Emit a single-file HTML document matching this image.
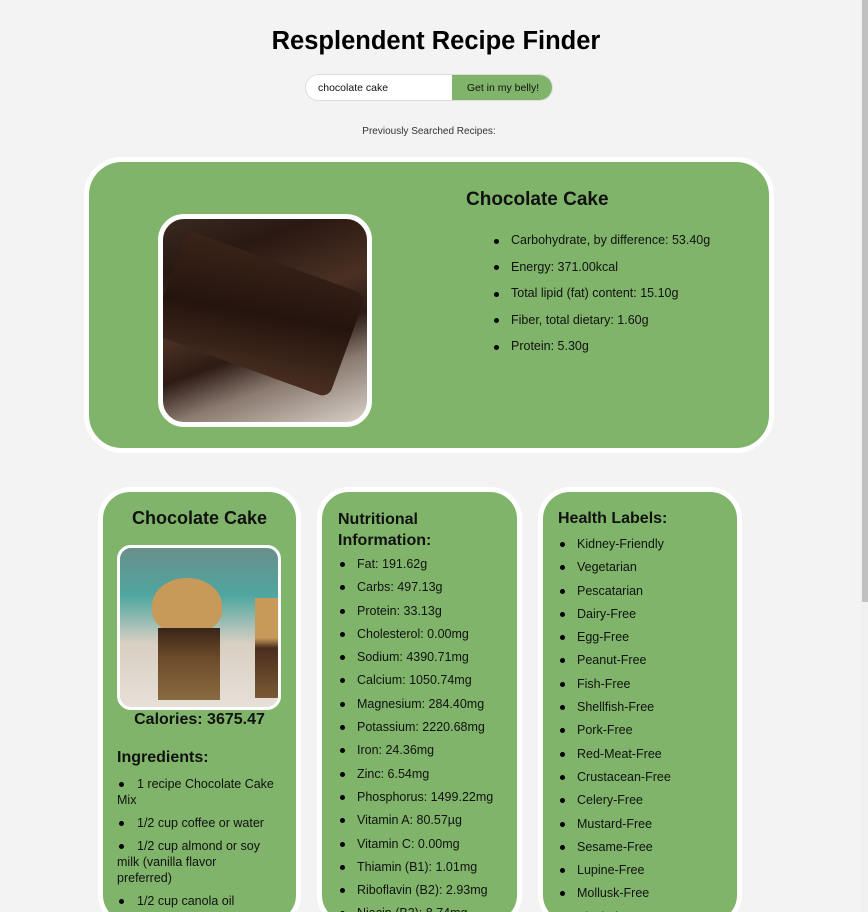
<!DOCTYPE html>
<html><head><meta charset="utf-8"><style>
*{margin:0;padding:0;box-sizing:border-box}
html,body{width:868px;height:912px;overflow:hidden;background:#f3f3f3;font-family:"Liberation Sans",sans-serif;color:#111;position:relative}
.abs{position:absolute}
h1{position:absolute;left:0;width:872px;text-align:center;top:27px;font-size:25.5px;font-weight:bold;color:#000}
.search{left:305px;top:74px;width:248px;height:27px;border:1px solid #ddd;border-radius:14px;background:#fff;overflow:hidden}
.search span{position:absolute;left:12px;top:7px;font-size:10.5px}
.search .btn{position:absolute;left:146px;top:0;width:102px;height:27px;background:#80b46a;font-size:10.5px;text-align:center;line-height:26px}
.prev{left:0;width:858px;text-align:center;top:126px;font-size:10px;color:#333}
.green{background:#80b46a}
.card{border:5px solid #fff;}
ul{list-style:none}
li{position:relative}
li:before{content:"";position:absolute;width:5px;height:5px;border-radius:50%;background:#000}
.top li{font-size:12.5px;height:26.6px;padding-left:17px}
.top li:before{left:0;top:5.5px}
.sm li{font-size:12.5px;line-height:16px;min-height:23.3px;padding-left:19px;white-space:nowrap}
.sm li:before{left:2px;top:6px}
.ing li{padding-left:0;text-indent:20px;margin-bottom:7px;min-height:0;white-space:nowrap}
.ing li:before{left:2px;top:6px}
</style></head><body>
<h1>Resplendent Recipe Finder</h1>
<div class="abs search"><span>chocolate cake</span><div class="btn">Get in my belly!</div></div>
<div class="abs prev">Previously Searched Recipes:</div>

<div class="abs card green" style="left:84px;top:157px;width:690px;height:296px;border-radius:38px"></div>
<div class="abs" style="left:158px;top:214px;width:214px;height:213px;border:5px solid #fff;border-radius:26px;overflow:hidden;background:linear-gradient(160deg,#3a2a22 0%,#2a1812 20%,#4a3024 45%,#2d1b14 60%,#8a7a70 75%,#d8d0c8 100%)">
<div class="abs" style="left:0;top:40px;width:190px;height:110px;background:linear-gradient(170deg,#3b2419,#24140e 50%,#4b3022);transform:rotate(20deg);border-radius:10px"></div></div>
<div class="abs" style="left:466px;top:189px;font-size:19px;font-weight:bold">Chocolate Cake</div>
<ul class="abs top" style="left:494px;top:233px">
<li>Carbohydrate, by difference: 53.40g</li><li>Energy: 371.00kcal</li><li>Total lipid (fat) content: 15.10g</li><li>Fiber, total dietary: 1.60g</li><li>Protein: 5.30g</li></ul>

<div class="abs card green" style="left:98px;top:487px;width:203px;height:440px;border-radius:32px"></div>
<div class="abs" style="left:103px;top:508px;width:193px;text-align:center;font-size:18px;font-weight:bold">Chocolate Cake</div>
<div class="abs" style="left:117px;top:545px;width:164px;height:165px;border:3px solid #fff;border-radius:14px;overflow:hidden;background:linear-gradient(180deg,#6a8f8a 0%,#4fa6a0 30%,#d8cfc2 60%,#e6e0d8 100%)">
<div class="abs" style="left:32px;top:30px;width:70px;height:55px;border-radius:50% 50% 40% 40%;background:#c79a5a"></div>
<div class="abs" style="left:38px;top:80px;width:62px;height:72px;background:linear-gradient(#3a2418,#6b4a2a 40%,#8a6a40)"></div>
<div class="abs" style="left:135px;top:50px;width:40px;height:100px;background:linear-gradient(#c79a5a,#c79a5a 40%,#4a2e1e 50%,#7a5a34)"></div></div>
<div class="abs" style="left:103px;top:711px;width:193px;text-align:center;font-size:16px;font-weight:bold">Calories: 3675.47</div>
<div class="abs" style="left:117px;top:749px;font-size:16px;font-weight:bold">Ingredients:</div>
<ul class="abs sm ing" style="left:117px;top:776px;width:170px">
<li>1 recipe Chocolate Cake<br>Mix</li><li>1/2 cup coffee or water</li><li>1/2 cup almond or soy<br>milk (vanilla flavor<br>preferred)</li><li>1/2 cup canola oil</li></ul>

<div class="abs card green" style="left:317px;top:487px;width:205px;height:440px;border-radius:32px"></div>
<div class="abs" style="left:338px;top:509px;font-size:16px;font-weight:bold;line-height:21px">Nutritional<br>Information:</div>
<ul class="abs sm" style="left:338px;top:556px">
<li>Fat: 191.62g</li><li>Carbs: 497.13g</li><li>Protein: 33.13g</li><li>Cholesterol: 0.00mg</li><li>Sodium: 4390.71mg</li><li>Calcium: 1050.74mg</li><li>Magnesium: 284.40mg</li><li>Potassium: 2220.68mg</li><li>Iron: 24.36mg</li><li>Zinc: 6.54mg</li><li>Phosphorus: 1499.22mg</li><li>Vitamin A: 80.57µg</li><li>Vitamin C: 0.00mg</li><li>Thiamin (B1): 1.01mg</li><li>Riboflavin (B2): 2.93mg</li><li>Niacin (B3): 8.74mg</li></ul>

<div class="abs card green" style="left:538px;top:487px;width:204px;height:440px;border-radius:32px"></div>
<div class="abs" style="left:558px;top:510px;font-size:16px;font-weight:bold">Health Labels:</div>
<ul class="abs sm" style="left:558px;top:536px">
<li>Kidney-Friendly</li><li>Vegetarian</li><li>Pescatarian</li><li>Dairy-Free</li><li>Egg-Free</li><li>Peanut-Free</li><li>Fish-Free</li><li>Shellfish-Free</li><li>Pork-Free</li><li>Red-Meat-Free</li><li>Crustacean-Free</li><li>Celery-Free</li><li>Mustard-Free</li><li>Sesame-Free</li><li>Lupine-Free</li><li>Mollusk-Free</li><li>Alcohol-Free</li></ul>

<div class="abs" style="left:861px;top:0;width:7px;height:912px;background:#f0f0f0"></div>
<div class="abs" style="left:862px;top:0;width:6px;height:602px;background:#c1c1c1"></div>
</body></html>
